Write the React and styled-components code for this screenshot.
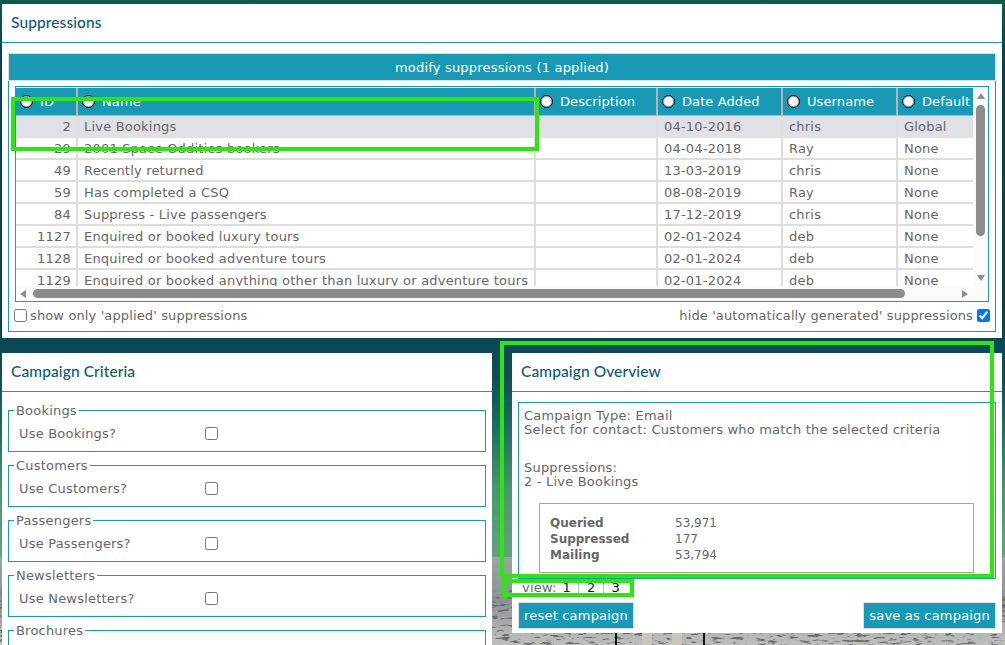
import React from 'react'
import styled, { createGlobalStyle } from 'styled-components'

const rows = [
  ['2', 'Live Bookings', '04-10-2016', 'chris', 'Global'],
  ['29', '2001 Space Oddities bookers', '04-04-2018', 'Ray', 'None'],
  ['49', 'Recently returned', '13-03-2019', 'chris', 'None'],
  ['59', 'Has completed a CSQ', '08-08-2019', 'Ray', 'None'],
  ['84', 'Suppress - Live passengers', '17-12-2019', 'chris', 'None'],
  ['1127', 'Enquired or booked luxury tours', '02-01-2024', 'deb', 'None'],
  ['1128', 'Enquired or booked adventure tours', '02-01-2024', 'deb', 'None'],
  ['1129', 'Enquired or booked anything other than luxury or adventure tours', '02-01-2024', 'deb', 'None'],
]

const columns = [
  ['ID', 62],
  ['Name', 458],
  ['Description', 122],
  ['Date Added', 125],
  ['Username', 115],
  ['Default', 77],
]

// the last group runs off the bottom of the window, only its legend shows
const criteria = [
  ['Bookings', 'Use Bookings?'],
  ['Customers', 'Use Customers?'],
  ['Passengers', 'Use Passengers?'],
  ['Newsletters', 'Use Newsletters?'],
  ['Brochures', null],
]

const Scenery = () => (
  <Backdrop viewBox="0 0 1005 645" width="1005" height="645">
    <defs>
      <linearGradient id="ground" x1="0" y1="0" x2="0" y2="1">
        <stop offset="0" stopColor="#9aa5a6" />
        <stop offset="0.5" stopColor="#8b9293" />
        <stop offset="0.85" stopColor="#b4b6b3" />
        <stop offset="1" stopColor="#bdbfbc" />
      </linearGradient>
      <filter id="speckle" x="0" y="0" width="100%" height="100%">
        <feTurbulence type="fractalNoise" baseFrequency="0.09 0.4" numOctaves="3" seed="4" />
        <feColorMatrix values="0 0 0 0 0.14  0 0 0 0 0.15  0 0 0 0 0.15  7 0 0 0 -3.9" />
      </filter>
    </defs>
    <rect x="0" y="557" width="1005" height="88" fill="url(#ground)" />
    <rect x="0" y="590" width="1005" height="55" filter="url(#speckle)" />
    <rect x="615" y="630" width="2" height="15" fill="#141414" />
    <rect x="703" y="630" width="2" height="15" fill="#141414" />
    <rect x="642" y="633" width="10" height="12" fill="#c9c5ba" />
    <rect x="672" y="633" width="10" height="12" fill="#c9c5ba" />
  </Backdrop>
)

const App = () => {
  return (
    <Page>
      <GlobalStyle />
      <Scenery />
      <Panel>
        <PanelTitle>Suppressions</PanelTitle>
        <GridBox>
          <GridCaption>modify suppressions (1 applied)</GridCaption>
          <GridFrame>
            <GridView>
              <Table>
                <colgroup>
                  {columns.map(([name, width]) => (
                    <Col key={name} $width={width} />
                  ))}
                </colgroup>
                <thead>
                  <tr>
                    {columns.map(([name]) => (
                      <HeadCell key={name}><Radio />{name}</HeadCell>
                    ))}
                  </tr>
                </thead>
                <tbody>
                  {rows.map((r, i) => (
                    <Row key={r[0]} $selected={i === 0}>
                      <IdCell>{r[0]}</IdCell>
                      <Cell>{r[1]}</Cell>
                      <Cell />
                      <Cell>{r[2]}</Cell>
                      <Cell>{r[3]}</Cell>
                      <Cell>{r[4]}</Cell>
                    </Row>
                  ))}
                </tbody>
              </Table>
            </GridView>
            <VScroll>
              <ArrowUp />
              <VThumb />
              <ArrowDown />
            </VScroll>
            <HScroll>
              <ArrowLeft />
              <HThumb />
              <ArrowRight />
            </HScroll>
          </GridFrame>
          <GridOptions>
            <OptionLabel><Check type="checkbox" readOnly />show only 'applied' suppressions</OptionLabel>
            <OptionLabel>hide 'automatically generated' suppressions<CheckAfter type="checkbox" checked readOnly /></OptionLabel>
          </GridOptions>
        </GridBox>
      </Panel>

      <Columns>
        <LeftPanel>
          <PanelTitle>Campaign Criteria</PanelTitle>
          <Criteria>
            {criteria.map(([name, label]) => (
              <Group key={name}>
                <GroupLegend>{name}</GroupLegend>
                <GroupRow>
                  {label && <GroupLabel>{label}</GroupLabel>}
                  {label && <GroupCheck type="checkbox" readOnly />}
                </GroupRow>
              </Group>
            ))}
          </Criteria>
        </LeftPanel>

        <RightPanel>
          <PanelTitle>Campaign Overview</PanelTitle>
          <Overview>
            <div>Campaign Type: Email</div>
            <div>Select for contact: Customers who match the selected criteria</div>
            <Suppressed>
              <div>Suppressions:</div>
              <div>2 - Live Bookings</div>
            </Suppressed>
            <Stats>
              <StatName>Queried</StatName><span>53,971</span>
              <StatName>Suppressed</StatName><span>177</span>
              <StatName>Mailing</StatName><span>53,794</span>
            </Stats>
          </Overview>
          <ViewBar>
            view:
            <ViewLinks>
              <ViewLink>1</ViewLink>
              <ViewLink>2</ViewLink>
              <ViewLink $current>3</ViewLink>
            </ViewLinks>
          </ViewBar>
          <Actions>
            <Button>reset campaign</Button>
            <Button>save as campaign</Button>
          </Actions>
        </RightPanel>
      </Columns>

      {/* green review marks drawn over the page */}
      <Mark $x={11} $y={97} $w={528} $h={54} />
      <Mark $x={500} $y={341} $w={494} $h={237} />
      <Mark $x={502} $y={579} $w={132} $h={18} />
    </Page>
  )
}

export default App

const GlobalStyle = createGlobalStyle`
  html, body {
    margin: 0;
    padding: 0;
    height: 100%;
    overflow: hidden;
  }
  body {
    font-family: "DejaVu Sans", Verdana, sans-serif;
    font-size: 13px;
    letter-spacing: 0.2px;
    color: #666;
  }
`

const Page = styled.div`
  position: relative;
  isolation: isolate;
  box-sizing: border-box;
  width: 1005px;
  height: 645px;
  overflow: hidden;
  padding: 4px 3px 0 2px;
  background:
    linear-gradient(180deg, #0a5c4a 0, #044250 60px, #06414f 300px, #0e4f5a 380px, #1f6f62 430px, #4a9670 490px, #62a180 557px),
    #0e4f5a;
`

const Backdrop = styled.svg`
  position: absolute;
  left: 0;
  top: 0;
  z-index: -1;
`

const Panel = styled.section`
  background: #fff;
  height: 334px;
`

const PanelTitle = styled.h2`
  margin: 0;
  height: 38px;
  padding-left: 9px;
  border-bottom: 1px solid #1899b6;
  font-family: Lato, "Open Sans", sans-serif;
  font-size: 15.5px;
  font-weight: 500;
  letter-spacing: 0.1px;
  line-height: 37px;
  color: #0c5a78;
`

const GridBox = styled.div`
  margin: 10px 6px 0;
  height: 279px;
  box-sizing: border-box;
  border: 1px solid #1899b6;
  border-top: 0;
  display: flex;
  flex-direction: column;
`

const GridCaption = styled.div`
  margin: 0 -1px;
  height: 28px;
  box-sizing: border-box;
  background: #1899b6;
  border: 1px solid #ddd;
  line-height: 27px;
  text-align: center;
  color: #fff;
`

const GridFrame = styled.div`
  margin: 5px 6px 0;
  height: 216px;
  box-sizing: border-box;
  border: 1px solid #1899b6;
  display: grid;
  grid-template-columns: 1fr 15px;
  grid-template-rows: 199px 1fr;
  background: #fafafa;
`

const GridView = styled.div`
  overflow: hidden;
  background: #fff;
  padding-top: 1px;
`

const Table = styled.table`
  table-layout: fixed;
  width: 959px;
  border-collapse: separate;
  border-spacing: 0;
`

const Col = styled.col`
  width: ${({ $width }) => $width}px;
`

const HeadCell = styled.th`
  height: 28px;
  box-sizing: border-box;
  padding: 0 0 0 4px;
  background: #1899b6;
  color: #fff;
  font-weight: 400;
  letter-spacing: 0.1px;
  text-align: left;
  white-space: nowrap;
  overflow: hidden;
  border-right: 2px solid #b5b5b5;
  border-bottom: 1px solid #b5b5b5;
  &:last-child {
    border-right: 0;
  }
`

const Radio = styled.span`
  display: inline-block;
  width: 11px;
  height: 11px;
  margin-right: 7px;
  border: 1px solid #000;
  border-radius: 50%;
  background: #fff;
  box-shadow: inset 0 0 0 1px rgba(0, 0, 0, 0.35);
  vertical-align: -2px;
`

const Cell = styled.td`
  height: 22px;
  box-sizing: border-box;
  padding: 0 0 0 6px;
  white-space: nowrap;
  overflow: hidden;
  border-right: 2px solid #ddd;
  border-bottom: 2px solid #ddd;
  &:last-child {
    border-right: 0;
  }
`

const IdCell = styled(Cell)`
  padding: 0 5px 0 0;
  text-align: right;
`

const Row = styled.tr`
  background: ${({ $selected }) => ($selected ? '#dfe1e6' : '#fff')};
  ${Cell} {
    border-bottom-color: ${({ $selected }) => ($selected ? '#dfe1e6' : '#ddd')};
  }
`

const VScroll = styled.div`
  display: flex;
  flex-direction: column;
  align-items: center;
  padding-top: 6px;
`

const HScroll = styled.div`
  grid-column: 1 / -1;
  display: flex;
  align-items: center;
  padding-left: 4px;
`

const VThumb = styled.div`
  width: 9px;
  height: 131px;
  margin-top: 6px;
  background: #8c8c8c;
  border-radius: 5px;
`

const HThumb = styled.div`
  width: 872px;
  height: 9px;
  margin-left: 7px;
  background: #8c8c8c;
  border-radius: 5px;
`

const ArrowUp = styled.i`
  border: 4px solid transparent;
  border-top: 0;
  border-bottom: 6px solid #8c8c8c;
`

const ArrowDown = styled.i`
  margin-top: 39px;
  border: 4px solid transparent;
  border-bottom: 0;
  border-top: 6px solid #8c8c8c;
`

const ArrowLeft = styled.i`
  border: 4px solid transparent;
  border-left: 0;
  border-right: 6px solid #8c8c8c;
`

const ArrowRight = styled.i`
  margin-left: 57px;
  border: 4px solid transparent;
  border-right: 0;
  border-left: 6px solid #8c8c8c;
`

const GridOptions = styled.div`
  display: flex;
  justify-content: space-between;
  align-items: center;
  height: 26px;
  padding: 0 5px;
  letter-spacing: 0.13px;
`

const OptionLabel = styled.label`
  display: flex;
  align-items: center;
`

const Check = styled.input`
  width: 13px;
  height: 13px;
  margin: 1px 3px 0 0;
`

const CheckAfter = styled(Check)`
  margin: 1px 0 0 4px;
`

const Columns = styled.div`
  display: grid;
  grid-template-columns: 490px 490px;
  column-gap: 20px;
  margin-top: 15px;
  align-items: start;
`

const LeftPanel = styled.section`
  background: #fff;
  height: 300px;
`

const RightPanel = styled.section`
  background: #fff;
  height: 280px;
`

const Criteria = styled.div`
  padding: 11px 6px 0;
`

const Group = styled.fieldset`
  margin: 0 0 6px;
  padding: 0 0 2px 5px;
  border: 1px solid #1899b6;
  min-width: 0;
`

const GroupLegend = styled.legend`
  padding: 0 2px;
  line-height: 15px;
`

const GroupRow = styled.div`
  display: flex;
  align-items: center;
  height: 31px;
  padding-left: 5px;
`

const GroupLabel = styled.span`
  width: 186px;
`

const GroupCheck = styled.input`
  width: 13px;
  height: 13px;
  margin: 0;
`

const Overview = styled.div`
  margin: 10px 6px 0;
  height: 177px;
  box-sizing: border-box;
  padding: 6px 5px 0;
  border: 1px solid #1899b6;
  line-height: 14px;
`

const Suppressed = styled.div`
  margin-top: 24px;
`

const Stats = styled.div`
  margin: 14px 16px 0 15px;
  height: 70px;
  box-sizing: border-box;
  padding: 11px 10px 0;
  border: 1px solid #b0a48f;
  display: grid;
  grid-template-columns: 125px 1fr;
  grid-auto-rows: 16px;
  font-size: 12px;
  letter-spacing: 0;
  line-height: 16px;
`

const StatName = styled.b`
  font-weight: 700;
`

const ViewBar = styled.div`
  height: 23px;
  padding-left: 10px;
  line-height: 18px;
  display: flex;
`

const ViewLinks = styled.div`
  display: flex;
  margin-left: -2px;
`

const ViewLink = styled.a`
  height: 12px;
  margin-top: 3px;
  padding: 0 7px 0 8px;
  line-height: 12px;
  color: ${({ $current }) => ($current ? '#000' : '#001a60')};
  border-right: ${({ $current }) => ($current ? '0' : '1px solid #9cc7e8')};
`

const Actions = styled.div`
  display: flex;
  justify-content: space-between;
  padding: 0 6px;
`

const Button = styled.button`
  height: 27px;
  padding: 0 5px;
  border: 1px solid #ddd;
  background: #1899b6;
  color: #fff;
  font: inherit;
  letter-spacing: inherit;
`

const Mark = styled.div`
  position: absolute;
  left: ${({ $x }) => $x}px;
  top: ${({ $y }) => $y}px;
  width: ${({ $w }) => $w}px;
  height: ${({ $h }) => $h}px;
  box-sizing: border-box;
  border: 4px solid #2ae90a;
  pointer-events: none;
`
